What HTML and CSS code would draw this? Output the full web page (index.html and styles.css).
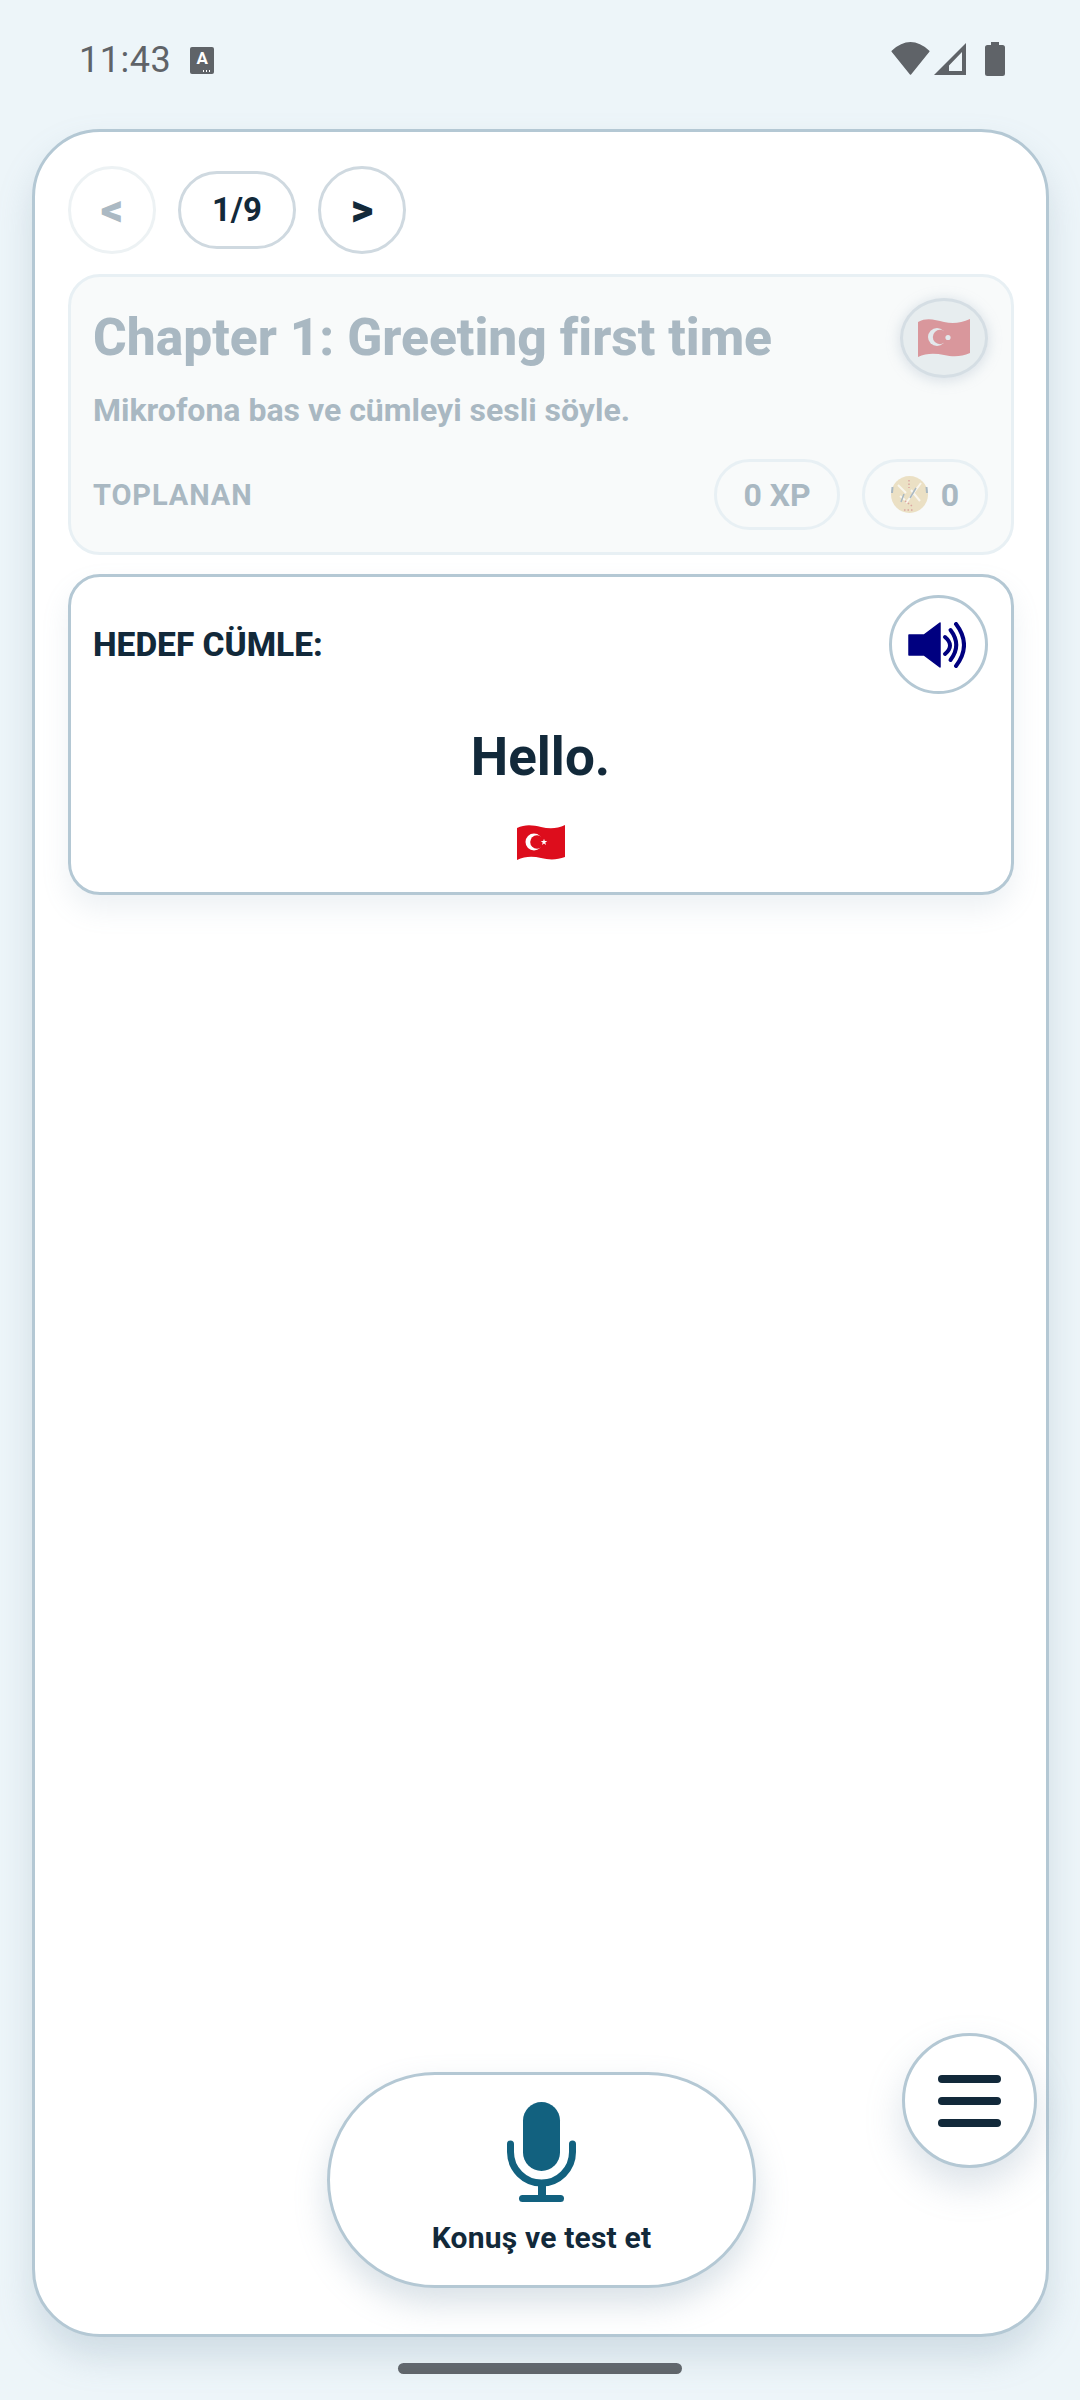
FILE: index.html
```html
<!DOCTYPE html>
<html lang="tr">

<head>
    <meta charset="UTF-8">
    <meta name="viewport" content="width=device-width, initial-scale=1.0">
    <title>Chapter 1</title>

    <link rel="stylesheet" href="styles.css">
</head>

<body>

    <header class="status-bar">
        <div class="status-left">
            <span class="clock">11:43</span>
            <span class="a11y-icon">A<i class="a11y-dots"></i></span>
        </div>
        <div class="status-right">
            <svg class="status-wifi" viewBox="0 0 39 33" width="39" height="33">
                <path fill="currentColor" stroke="currentColor" stroke-width="1.5" stroke-linejoin="round" d="M19.500 32 1.200 9.300Q19.500-7.500 37.800 9.300Z"></path>
            </svg>
            <svg class="status-signal" viewBox="0 0 32 32" width="32" height="32">
                <path fill="currentColor" fill-rule="evenodd" d="M0 32 32 0V32ZM15 28H28V9L15 22.500Z"></path>
            </svg>
            <svg class="status-battery" viewBox="0 0 20 34" width="20" height="34">
                <path fill="currentColor" d="M6 0h8v3h3.500a2.500 2.500 0 0 1 2.500 2.500v26a2.500 2.500 0 0 1-2.500 2.500h-15a2.500 2.500 0 0 1-2.500-2.500v-26a2.500 2.500 0 0 1 2.500-2.500h3.500z"></path>
            </svg>
        </div>
    </header>

    <main class="panel">
        <nav class="pager">
            <button class="pager-btn pager-btn-off">&lt;</button>
            <span class="pager-count">1/9</span>
            <button class="pager-btn">&gt;</button>
        </nav>

        <section class="chapter-card">
            <div class="chapter-top">
                <h1 class="chapter-title">Chapter 1: Greeting first time</h1>
                <button class="flag-btn">
                    <svg class="flag-faded" viewBox="0 0 52 38" width="52" height="38">
                        <path fill="#d9979c" d="M0 3C9-2 17 1 26 3 35 5 43 4 52 0V34C43 38 35 38 26 36 17 34 8 34 0 38Z"></path>
                        <circle cx="19" cy="18" r="9" fill="#e3e9ec"></circle>
                        <circle cx="22" cy="18" r="7.200" fill="#d9979c"></circle>
                        <circle cx="30" cy="18.500" r="2.600" fill="#e3e9ec"></circle>
                    </svg>
                </button>
            </div>
            <p class="chapter-hint">Mikrofona bas ve cümleyi sesli söyle.</p>
            <div class="chapter-bottom">
                <span class="collected-label">TOPLANAN</span>
                <div class="collected-pills">
                    <span class="stat-pill">0 XP</span>
                    <span class="stat-pill">
                        <svg class="coin" viewBox="0 0 37 37" width="37" height="37">
                            <circle cx="18.500" cy="18.500" r="18.500" fill="#ebe0c4"></circle>
                            <path fill="none" stroke="#f9f6ee" stroke-width="2" d="M7 9 15 17M30 7 15 27M20 14 29 25M9 20 14 24"></path>
                            <path fill="none" stroke="#a9b8c2" stroke-width="1.500" d="M25 12 19 22M10 26 13 18"></path>
                            <path fill="none" stroke="#a9b8c2" stroke-width="2" d="M1.500 11 1 17M35.500 11 36 17"></path>
                            <path fill="none" stroke="#dba5a0" stroke-width="1.500" stroke-dasharray="1.500 2" d="M18 4V12M14 25 21 30M13 34H23"></path>
                        </svg>
                        0
                    </span>
                </div>
            </div>
        </section>

        <section class="target-card">
            <div class="target-top">
                <span class="target-label">HEDEF CÜMLE:</span>
                <button class="speaker-btn">
                    <svg viewBox="0 0 58 46" width="58" height="46">
                        <path fill="#000080" stroke="#000080" stroke-width="1.500" stroke-linejoin="round" d="M1 13H16L32 1V45L16 33H1Z"></path>
                        <g fill="none" stroke="#000080" stroke-width="4" stroke-linecap="round">
                            <path d="M37 15Q47 23.500 37 32"></path>
                            <path d="M42.500 8Q54 23 42.500 38"></path>
                            <path d="M48 2Q64 23 48 44"></path>
                        </g>
                    </svg>
                </button>
            </div>
            <p class="target-text">Hello.</p>
            <svg class="target-flag" viewBox="0 0 48 35" width="48" height="35">
                <path fill="#dd0d1c" d="M0 3C8-1 16 0 24 2 32 4 40 4 48 0V32C40 35 32 35 24 33 16 31 8 31 0 35Z"></path>
                <circle cx="17" cy="17" r="8.500" fill="#fff"></circle>
                <circle cx="20" cy="17" r="6.800" fill="#dd0d1c"></circle>
                <path fill="#fff" d="M27 13.700 27.800 16 30.300 16 28.300 17.500 29 19.900 27 18.500 25 19.900 25.700 17.500 23.700 16 26.200 16Z"></path>
            </svg>
        </section>

        <button class="menu-btn">
            <span class="menu-bar"></span>
            <span class="menu-bar"></span>
            <span class="menu-bar"></span>
        </button>

        <button class="mic-btn">
            <svg viewBox="0 0 69 100" width="69" height="100">
                <rect x="16" y="0" width="37" height="69" rx="18.500" fill="#12617f"></rect>
                <path fill="none" stroke="#12617f" stroke-width="7" stroke-linecap="round" d="M3.500 42V50A31 31 0 0 0 65.500 50V42"></path>
                <rect x="31" y="82" width="8" height="14" fill="#12617f"></rect>
                <rect x="12" y="93" width="45" height="7" rx="3.500" fill="#12617f"></rect>
            </svg>
            <span class="mic-label">Konuş ve test et</span>
        </button>
    </main>

    <footer class="nav-area">
        <span class="home-bar"></span>
    </footer>

</body>

</html>
```

FILE: styles.css
```css
*,
*::before,
*::after {
    box-sizing: border-box;
}

body {
    margin: 0;
    height: 2400px;
    overflow: hidden;
    background-color: #edf5f9;
    font-family: Roboto, "Liberation Sans", sans-serif;
    color: #12293a;
    display: flex;
    flex-direction: column;
}

button {
    font-family: inherit;
    color: inherit;
    background: #fff;
    padding: 0;
}

h1,
p {
    margin: 0;
}

.status-bar {
    height: 129px;
    padding: 42px 75px 0 79px;
    display: flex;
    justify-content: space-between;
    align-items: flex-start;
    color: #5f6368;
}

.status-left {
    display: flex;
    align-items: center;
    gap: 19px;
}

.clock {
    font-size: 36px;
    line-height: 36px;
    letter-spacing: 0.5px;
}

.a11y-icon {
    width: 24px;
    height: 27px;
    background-color: #5f6368;
    border-radius: 2px;
    color: #fff;
    font-size: 17px;
    font-weight: 700;
    line-height: 22px;
    text-align: center;
    position: relative;
}

.a11y-dots {
    position: absolute;
    left: 12px;
    bottom: 2px;
    width: 9px;
    height: 2px;
    background: radial-gradient(circle, #fff 1px, transparent 1px) 0 0 / 3px 2px;
}

.status-right {
    display: flex;
    align-items: flex-start;
    gap: 4px;
}

.status-signal {
    margin-top: 1px;
}

.status-battery {
    margin-left: 15px;
}

.panel {
    height: 2208px;
    margin: 0 31px 0 32px;
    padding: 34px 32px 0 33px;
    background-color: #fff;
    border: 3px solid #b4c8d4;
    border-radius: 68px;
    box-shadow: 0 20px 34px rgba(130, 155, 175, 0.27);
    position: relative;
}

.pager {
    display: flex;
    align-items: center;
    gap: 22px;
}

.pager-btn {
    width: 88px;
    height: 88px;
    border: 3px solid #cfd9e0;
    border-radius: 50%;
    font-size: 44px;
    font-weight: 900;
}

.pager-btn-off {
    border-color: #edf2f4;
    color: #abb9c3;
}

.pager-count {
    width: 118px;
    height: 78px;
    border: 3px solid #cfd9e0;
    border-radius: 39px;
    font-size: 33px;
    font-weight: 700;
    line-height: 72px;
    text-align: center;
}

.chapter-card {
    height: 281px;
    margin-top: 20px;
    padding: 21px 23px 0 22px;
    background-color: #f8fafa;
    border: 3px solid #e8f0f4;
    border-radius: 32px;
    color: #a9b8c2;
    font-weight: 700;
}

.chapter-top {
    display: flex;
    align-items: center;
    justify-content: space-between;
}

.chapter-title {
    font-size: 51.5px;
    font-weight: 800;
    line-height: 56px;
}

.flag-btn {
    width: 88px;
    height: 80px;
    border: 3px solid #d5dee4;
    border-radius: 50%;
    background-color: #e7edef;
    box-shadow: 0 2px 14px rgba(150, 170, 190, 0.35);
    display: flex;
    align-items: center;
    justify-content: center;
}

.chapter-hint {
    margin-top: 13px;
    font-size: 32px;
    line-height: 38px;
}

.chapter-bottom {
    margin-top: 30px;
    display: flex;
    align-items: center;
    justify-content: space-between;
}

.collected-label {
    font-size: 29px;
    letter-spacing: 0.9px;
}

.collected-pills {
    display: flex;
    gap: 22px;
}

.stat-pill {
    height: 71px;
    min-width: 125px;
    padding: 0 26px;
    border: 3px solid #e8f0f4;
    border-radius: 36px;
    font-size: 32px;
    display: flex;
    align-items: center;
    justify-content: center;
    gap: 13px;
}

.coin {
    flex: none;
}

.target-card {
    height: 321px;
    margin-top: 19px;
    padding: 18px 23px 0 22px;
    border: 3px solid #b4c8d4;
    border-radius: 32px;
    box-shadow: 0 14px 28px rgba(130, 155, 175, 0.14);
    display: flex;
    flex-direction: column;
    align-items: center;
}

.target-top {
    width: 100%;
    display: flex;
    align-items: center;
    justify-content: space-between;
}

.target-label {
    font-size: 33.5px;
    font-weight: 800;
}

.speaker-btn {
    width: 99px;
    height: 99px;
    padding-right: 3px;
    border: 3px solid #b4c8d4;
    border-radius: 50%;
    display: flex;
    align-items: center;
    justify-content: center;
}

.target-text {
    margin-top: 31px;
    font-size: 53px;
    font-weight: 700;
    line-height: 64px;
}

.target-flag {
    margin-top: 36px;
}

.menu-btn {
    position: absolute;
    right: 9px;
    bottom: 166px;
    width: 135px;
    height: 135px;
    border: 3px solid #b4c8d4;
    border-radius: 50%;
    box-shadow: 0 18px 36px rgba(130, 155, 175, 0.28);
    display: flex;
    flex-direction: column;
    align-items: center;
    justify-content: center;
    gap: 14px;
}

.menu-bar {
    width: 63px;
    height: 8px;
    background-color: #12293a;
    border-radius: 4px;
}

.mic-btn {
    position: absolute;
    left: 292px;
    bottom: 46px;
    width: 429px;
    height: 216px;
    padding-top: 27px;
    border: 3px solid #b4c8d4;
    border-radius: 108px;
    box-shadow: 0 16px 32px rgba(130, 155, 175, 0.3);
    display: flex;
    flex-direction: column;
    align-items: center;
}

.mic-label {
    margin-top: 18px;
    font-size: 30px;
    font-weight: 700;
    letter-spacing: 0.2px;
}

.nav-area {
    flex: 1;
    padding-top: 26px;
    display: flex;
    justify-content: center;
    align-items: flex-start;
}

.home-bar {
    width: 284px;
    height: 11px;
    background-color: #5f6368;
    border-radius: 6px;
}
```
